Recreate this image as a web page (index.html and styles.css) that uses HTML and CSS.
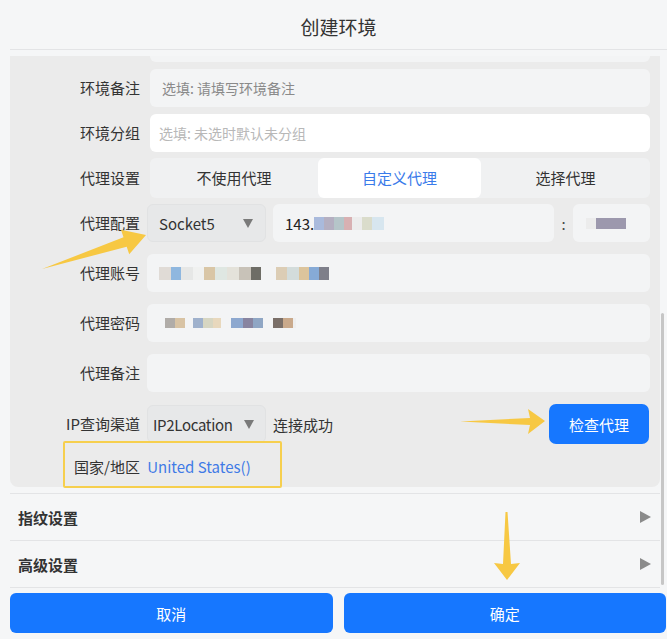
FILE: index.html
```html
<!DOCTYPE html>
<html lang="zh-CN">
<head>
  <meta charset="UTF-8" />
  <title>创建环境</title>
  <link rel="stylesheet" href="styles.css">
</head>
<body>

<div class="dialog">
  <div class="dialog-title">创建环境</div>

  <div class="content">
    <div class="panel">
      <div class="row-cut"><div class="field cut"></div></div>

      <div class="row r1">
        <div class="label">环境备注</div>
        <div class="field"><span class="placeholder">选填: 请填写环境备注</span></div>
      </div>

      <div class="row r2">
        <div class="label">环境分组</div>
        <div class="field white"><span class="placeholder light">选填: 未选时默认未分组</span></div>
      </div>

      <div class="row r3">
        <div class="label">代理设置</div>
        <div class="segmented">
          <div class="seg">不使用代理</div>
          <div class="seg active">自定义代理</div>
          <div class="seg">选择代理</div>
        </div>
      </div>

      <div class="row r4 tight">
        <div class="label">代理配置</div>
        <div class="proxy-line">
          <div class="select">Socket5 <span class="caret"></span></div>
          <div class="field host">143.<span class="blur blur-ip"></span></div>
          <div class="colon">:</div>
          <div class="field port"><span class="blur blur-port"></span></div>
        </div>
      </div>

      <div class="row r5 tight">
        <div class="label">代理账号</div>
        <div class="field"><span class="blur blur-account"></span></div>
      </div>

      <div class="row r5 tight">
        <div class="label">代理密码</div>
        <div class="field"><span class="blur blur-password"></span></div>
      </div>

      <div class="row r5 tight">
        <div class="label">代理备注</div>
        <div class="field"></div>
      </div>

      <div class="row r5 tight">
        <div class="label">IP查询渠道</div>
        <div class="check-line">
          <div class="select compact">IP2Location <span class="caret"></span></div>
          <div class="status">连接成功</div>
          <button class="btn-check">检查代理</button>
        </div>
      </div>

      <div class="country">
        <span class="country-label">国家/地区</span>
        <span class="country-value">United States()</span>
      </div>
    </div>

    <div class="section first">
      <span>指纹设置</span><span class="arrow-right"></span>
    </div>
    <div class="section last">
      <span>高级设置</span><span class="arrow-right"></span>
    </div>
  </div>

  <div class="actions">
    <button class="btn">取消</button>
    <button class="btn">确定</button>
  </div>

  <!-- scrollbar thumb -->
  <div class="scroll-thumb"></div>

  <!-- annotations -->
  <div class="callout"></div>
  <svg class="arrows" width="667" height="639" viewBox="0 0 667 639">
    <polygon points="42,269 123.5,237.3 121,229.7 146,235 129.2,254.3 126.7,246.7" />
    <polygon points="460,421.5 530,418 528,409 545,421 528,434 530,425" />
    <polygon points="505.5,512 507.5,512 511,564 520,563 507,580 494,563 503,564" />
  </svg>
</div>

</body>
</html>
```

FILE: styles.css
```css
html, body {
  margin: 0;
  background-color: #f5f6f7;
  color: #333;
  font-family: "Noto Sans CJK SC", "Noto Sans", sans-serif;
  overflow: hidden;
}

.dialog {
  position: relative;
  height: 639px;
  padding: 0 1px 0 10px;
  box-sizing: border-box;
}

.dialog-title {
  height: 46px;
  padding-top: 3px;
  display: flex;
  justify-content: center;
  align-items: center;
  font-size: 19px;
  color: #333;
  border-bottom: 1px solid #e3e4e6;
  margin-right: -1px;
}

.content {
  margin-right: 6px;
}

.panel {
  margin-top: 6px;
  background-color: #ebebeb;
  border-radius: 0 0 8px 8px;
  padding: 0 10px 0 0;
  height: 431px;
  box-sizing: border-box;
}

.row-cut {
  padding-left: 140px;
}

.field {
  height: 38px;
  background-color: #f3f4f5;
  border-radius: 6px;
  display: flex;
  align-items: center;
  padding-left: 12px;
  box-sizing: border-box;
  font-size: 14px;
}

.field.cut {
  height: 6px;
  border-radius: 0 0 6px 6px;
}

.field.white {
  background-color: #fff;
  padding-left: 9px;
}

.placeholder {
  color: #8a8a8a;
}

.placeholder.light {
  color: #b8b8b8;
}

.row {
  display: grid;
  grid-template-columns: 130px 1fr;
  column-gap: 10px;
  align-items: center;
}

.row.tight {
  column-gap: 7px;
}

.r1, .r2 { margin-top: 7px; }
.r3 { margin-top: 6px; }
.r4 { margin-top: 6px; }
.r5 { margin-top: 12px; }

.label {
  text-align: right;
  font-size: 15px;
  color: #333;
  padding-bottom: 2px;
}

.segmented {
  height: 40px;
  display: grid;
  grid-template-columns: 168px 163px 1fr;
  background-color: #f0f1f2;
  border-radius: 6px;
}

.seg {
  display: flex;
  justify-content: center;
  align-items: center;
  font-size: 15px;
  color: #333;
  border-radius: 6px;
  padding-bottom: 2px;
}

.seg.active {
  background-color: #fff;
  color: #3a7bea;
}

.proxy-line {
  display: flex;
  align-items: center;
}

.select {
  width: 119px;
  height: 38px;
  flex: none;
  background-color: #e7e8e9;
  border: 1px solid #e1e2e3;
  border-radius: 6px;
  box-sizing: border-box;
  display: flex;
  align-items: center;
  justify-content: space-between;
  padding: 0 12px 0 11px;
  font-size: 15px;
  color: #333;
}

.select.compact {
  padding: 0 11px 0 5px;
  letter-spacing: -0.3px;
}

.caret {
  width: 0;
  height: 0;
  flex: none;
  border-left: 5px solid transparent;
  border-right: 5px solid transparent;
  border-top: 9px solid #7a7a7a;
}

.field.host {
  flex: 1;
  margin-left: 7px;
  color: #222;
  font-size: 15px;
}

.colon {
  width: 19px;
  text-align: center;
  font-size: 15px;
  color: #444;
}

.field.port {
  width: 77px;
  flex: none;
  padding-left: 13px;
}

.blur {
  display: inline-block;
}

.blur-ip {
  width: 70px;
  height: 13px;
  background: linear-gradient(90deg,
    #a9badc 0 10px, #b4afc1 10px 20px, #b5c5c9 20px 30px, #d8b0b2 30px 38px,
    #ececec 38px 48px, #dadccb 48px 58px, #d7e6ef 58px 70px);
}

.blur-port {
  width: 40px;
  height: 11px;
  background: linear-gradient(90deg, #ececec 0 10px, #9c98ad 10px 40px);
}

.blur-account {
  width: 170px;
  height: 13px;
  background: linear-gradient(90deg,
    #e0dbd6 0 12px, #8fb7df 12px 22px, #e6e7e6 22px 34px, #f0f1f0 34px 45px,
    #d9c6a6 45px 56px, #dfe7e2 56px 68px, #e4e2da 68px 80px, #c8c2b8 80px 92px,
    #6e6d66 92px 102px, #f3f4f5 102px 117px, #dccdb5 117px 128px, #d3dcdb 128px 140px,
    #dcc49c 140px 150px, #86aad6 150px 160px, #7e7f8a 160px 170px);
}

.blur-password {
  width: 131px;
  height: 10px;
  margin-left: 6px;
  background: linear-gradient(90deg,
    #b0aca8 0 10px, #d8c3a4 10px 20px, #f3f4f5 20px 28px, #9fb1cc 28px 38px,
    #d7d6c2 38px 48px, #e8d8bd 48px 56px, #f3f4f5 56px 66px, #8da8cf 66px 78px,
    #8884a0 78px 88px, #8fa6c4 88px 98px, #f3f4f5 98px 108px, #7a6f68 108px 118px,
    #c9a98b 118px 128px, #eeeeee 128px 131px);
}

.check-line {
  display: flex;
  align-items: center;
}

.status {
  margin-left: 7px;
  font-size: 15px;
  color: #333;
  flex: 1;
}

.btn-check {
  width: 100px;
  height: 40px;
  border: none;
  border-radius: 7px;
  background-color: #1677ff;
  color: #fff;
  font-family: inherit;
  font-size: 15px;
  margin-right: 1px;
}

.country {
  padding: 12px 0 0 64px;
  font-size: 15px;
}

.country-value {
  color: #3f7ae6;
  margin-left: 4px;
}

.section {
  height: 46px;
  border-top: 1px solid #e3e4e6;
  display: flex;
  align-items: center;
  justify-content: space-between;
  padding: 0 9px 0 8px;
  font-size: 15px;
  font-weight: bold;
  color: #333;
}

.section.first {
  margin-top: 6px;
}

.section.last {
  border-bottom: 1px solid #e3e4e6;
}

.arrow-right {
  width: 0;
  height: 0;
  border-top: 6px solid transparent;
  border-bottom: 6px solid transparent;
  border-left: 11px solid #8b8b8b;
}

.actions {
  display: grid;
  grid-template-columns: 1fr 1fr;
  column-gap: 11px;
  margin-top: 5px;
}

.btn {
  height: 40px;
  border: none;
  border-radius: 6px;
  background-color: #1677ff;
  color: #fff;
  font-family: inherit;
  font-size: 15px;
}

.scroll-thumb {
  position: absolute;
  left: 661px;
  top: 313px;
  width: 3px;
  height: 272px;
  border-radius: 2px;
  background-color: #c6c6c6;
}

.callout {
  position: absolute;
  left: 63px;
  top: 441px;
  width: 219px;
  height: 47px;
  border: 2px solid #f6cf4e;
  border-radius: 2px;
  box-sizing: border-box;
}

.arrows {
  position: absolute;
  left: 0;
  top: 0;
  pointer-events: none;
  fill: #f7c843;
}
```
